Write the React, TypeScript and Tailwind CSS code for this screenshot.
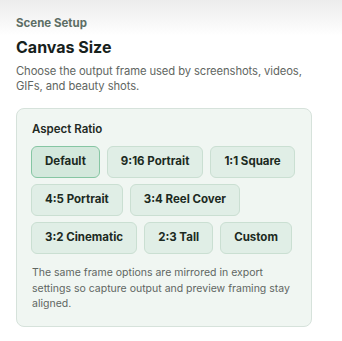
const options = [
  ['Default', '9:16 Portrait', '1:1 Square'],
  ['4:5 Portrait', '3:4 Reel Cover'],
  ['3:2 Cinematic', '2:3 Tall', 'Custom'],
];

export default function App() {
  const selected = 'Default';

  return (
    <div
      className="w-[342px] h-[341px] bg-[linear-gradient(to_bottom,#ececec,#ffffff_36px)] px-4 pt-[15px]"
      style={{ fontFamily: 'Inter, "Noto Sans", sans-serif' }}
    >
      <div className="text-[11.5px] font-bold leading-[16px] text-[#5d6e65]">Scene Setup</div>
      <h2 className="mt-[6px] text-[16px] font-bold leading-[20px] text-[#17211c]">Canvas Size</h2>
      <p className="mt-[7px] text-[11.25px] leading-[15px] tracking-[-0.1px] text-[#5f6662]">
        Choose the output frame used by screenshots, videos, GIFs, and beauty shots.
      </p>

      <div className="mt-[14px] w-[296px] rounded-lg border border-[#d6e2db] bg-[#f0f6f2] px-[14px] pt-[13px] pb-[14px]">
        <div className="pl-px text-[11.5px] font-semibold leading-[14px] text-[#1f2a24]">Aspect Ratio</div>
        <div className="mt-[10px] flex flex-col gap-[6px]">
          {options.map((row, i) => (
            <div key={i} className="flex gap-[7px]">
              {row.map((opt) => (
                <button
                  key={opt}
                  className={
                    opt === selected
                      ? 'h-[32px] shrink-0 whitespace-nowrap rounded-md border border-[#86c6a3] bg-[#d3e8dc] px-[13px] text-[11.5px] font-bold text-[#1c2a22]'
                      : 'h-[32px] shrink-0 whitespace-nowrap rounded-md border border-[#cadfd2] bg-[#e0eee6] px-[13px] text-[11.5px] font-bold text-[#1c2a22]'
                  }
                >
                  {opt}
                </button>
              ))}
            </div>
          ))}
        </div>
        <p className="mt-[11px] pl-px text-[10.5px] leading-[15.5px] text-[#5f6662]">
          The same frame options are mirrored in export settings so capture output and preview framing stay aligned.
        </p>
      </div>
    </div>
  );
}
